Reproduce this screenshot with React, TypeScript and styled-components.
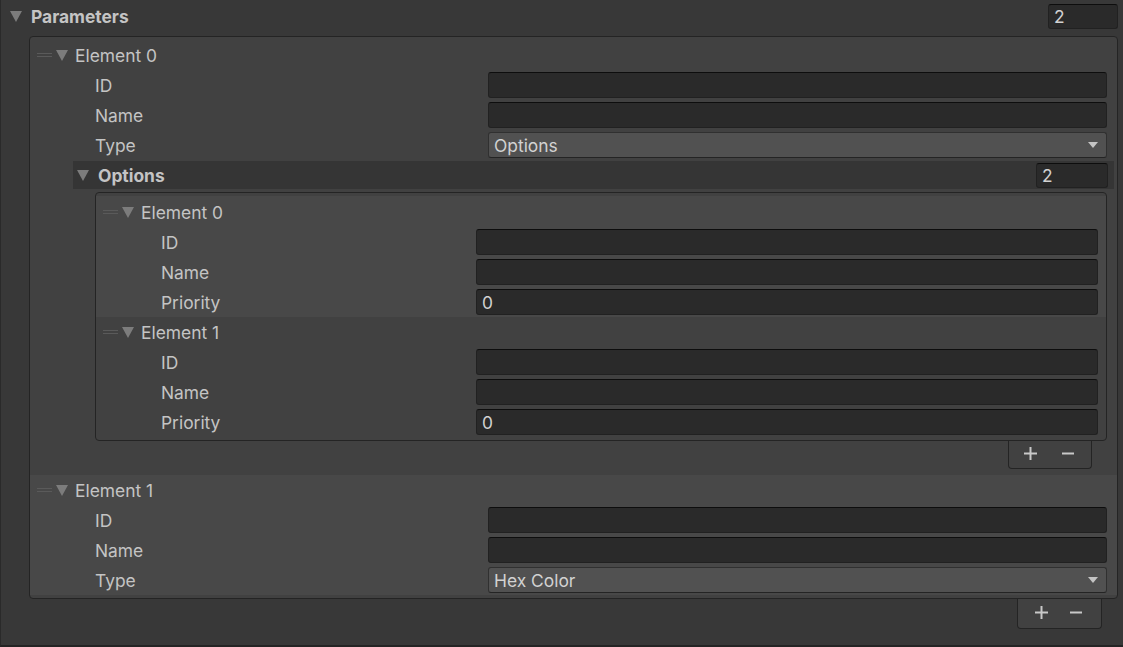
import React from "react";
import styled, { createGlobalStyle } from "styled-components";

const GlobalStyle = createGlobalStyle`
  html, body {
    margin: 0;
    padding: 0;
    background: #383838;
  }
  * {
    box-sizing: border-box;
  }
`;

const Inspector = styled.div`
  width: 1123px;
  height: 647px;
  background: #383838;
  border-left: 1px solid #2a2a2a;
  border-bottom: 2px solid #242424;
  font-family: Inter, "Noto Sans", sans-serif;
  font-size: 17.4px;
  color: #c4c4c4;
  overflow: hidden;
`;

const HeaderRow = styled.div`
  height: 36px;
  display: flex;
  align-items: center;
  padding: 0 5px 4px 9px;
`;

const Title = styled.span<{ $bold?: boolean }>`
  font-weight: ${(p) => (p.$bold ? 700 : 400)};
  flex: 1;
  white-space: nowrap;
`;

const Arrow = styled.span<{ $small?: boolean }>`
  display: inline-block;
  width: 0;
  height: 0;
  border-left: 6px solid transparent;
  border-right: 6px solid transparent;
  border-top: 11px solid #7c7c7c;
  margin-right: ${(p) => (p.$small ? 7 : 9)}px;
  flex-shrink: 0;
`;

const Handle = styled.span`
  width: 15px;
  height: 4px;
  border-top: 1px solid #5a5a5a;
  border-bottom: 1px solid #5a5a5a;
  margin: 0 4px 0 7px;
  flex-shrink: 0;
`;

const Field = styled.div<{ $width?: number }>`
  height: 26px;
  width: ${(p) => (p.$width ? `${p.$width}px` : "auto")};
  flex: ${(p) => (p.$width ? "none" : 1)};
  background: #2a2a2a;
  border: 1px solid #212121;
  border-top-color: #0d0d0d;
  border-radius: 3px;
  display: flex;
  align-items: center;
  padding-left: 5px;
  color: #d2d2d2;
`;

const Dropdown = styled.div`
  flex: 1;
  height: 26px;
  background: #515151;
  border: 1px solid #303030;
  border-bottom-color: #242424;
  border-radius: 3px;
  display: flex;
  align-items: center;
  padding: 0 8px 0 5px;
  color: #d2d2d2;
  justify-content: space-between;
`;

const DropArrow = styled.span`
  width: 0;
  height: 0;
  border-left: 5.5px solid transparent;
  border-right: 5.5px solid transparent;
  border-top: 6px solid #c4c4c4;
`;

const ListBox = styled.div<{ $ml: number; $mr: number; $pt: number; $pb: number }>`
  margin: 0 ${(p) => p.$mr}px 0 ${(p) => p.$ml}px;
  background: #414141;
  border: 1px solid #242424;
  border-radius: 4px;
  padding: ${(p) => p.$pt}px 0 ${(p) => p.$pb}px;
`;

const ElementBlock = styled.div<{ $active?: boolean; $pt?: number }>`
  background: ${(p) => (p.$active ? "#484848" : "transparent")};
  padding-top: ${(p) => p.$pt ?? 0}px;
`;

const Row = styled.div<{ $pr: number }>`
  height: 30px;
  display: flex;
  align-items: center;
  padding-right: ${(p) => p.$pr}px;
`;

const Label = styled.span<{ $width: number }>`
  width: ${(p) => p.$width}px;
  padding-left: 65px;
  flex-shrink: 0;
  white-space: nowrap;
`;

const SubHeader = styled.div`
  height: 28px;
  margin: 1px 3px 0 43px;
  background: #353535;
  display: flex;
  align-items: center;
  padding: 0 6px 0 4px;
`;

const FooterWrap = styled.div<{ $mr: number; $mb: number }>`
  display: flex;
  justify-content: flex-end;
  padding-right: ${(p) => p.$mr}px;
  margin-bottom: ${(p) => p.$mb}px;
`;

const Footer = styled.div<{ $width: number; $height: number; $pl: number; $pr: number }>`
  width: ${(p) => p.$width}px;
  height: ${(p) => p.$height}px;
  background: #414141;
  border: 1px solid #242424;
  border-top: none;
  border-radius: 0 0 4px 4px;
  display: flex;
  align-items: center;
  justify-content: space-between;
  padding: 0 ${(p) => p.$pr}px 2px ${(p) => p.$pl}px;
`;

const Plus = () => (
  <svg width="13" height="13" viewBox="0 0 13 13">
    <rect x="5.5" y="0" width="2" height="13" fill="#c8c8c8" />
    <rect x="0" y="5.5" width="13" height="2" fill="#c8c8c8" />
  </svg>
);

const Minus = () => (
  <svg width="12" height="13" viewBox="0 0 12 13">
    <rect x="0" y="5.5" width="12" height="2" fill="#c8c8c8" />
  </svg>
);

type FieldDef = { label: string; value?: string; dropdown?: boolean };

const ElementHeader: React.FC<{ name: string }> = ({ name }) => (
  <Row $pr={0}>
    <Handle />
    <Arrow $small />
    <Title>{name}</Title>
  </Row>
);

const FieldRow: React.FC<{ def: FieldDef; labelWidth: number; pr: number }> = ({
  def,
  labelWidth,
  pr,
}) => (
  <Row $pr={pr}>
    <Label $width={labelWidth}>{def.label}</Label>
    {def.dropdown ? (
      <Dropdown>
        {def.value}
        <DropArrow />
      </Dropdown>
    ) : (
      <Field>{def.value}</Field>
    )}
  </Row>
);

const optionFields: FieldDef[] = [
  { label: "ID" },
  { label: "Name" },
  { label: "Priority", value: "0" },
];

const App: React.FC = () => {
  return (
    <>
      <GlobalStyle />
      <Inspector>
        <HeaderRow>
          <Arrow />
          <Title $bold>Parameters</Title>
          <Field $width={70} style={{ height: 25 }}>2</Field>
        </HeaderRow>

        <ListBox $ml={28} $mr={5} $pt={3} $pb={3}>
          <ElementBlock>
            <ElementHeader name="Element 0" />
            <FieldRow def={{ label: "ID" }} labelWidth={458} pr={10} />
            <FieldRow def={{ label: "Name" }} labelWidth={458} pr={10} />
            <FieldRow
              def={{ label: "Type", value: "Options", dropdown: true }}
              labelWidth={458}
              pr={10}
            />
            <SubHeader>
              <Arrow />
              <Title $bold>Options</Title>
              <Field $width={72} style={{ height: 25 }}>2</Field>
            </SubHeader>

            <ListBox $ml={65} $mr={10} $pt={3} $pb={3} style={{ marginTop: 3 }}>
              {[0, 1].map((i) => (
                <ElementBlock key={i} $active={i === 0} $pt={i === 0 ? 1 : 0}>
                  <ElementHeader name={`Element ${i}`} />
                  {optionFields.map((f) => (
                    <FieldRow key={f.label} def={f} labelWidth={380} pr={8} />
                  ))}
                </ElementBlock>
              ))}
            </ListBox>
            <FooterWrap $mr={25} $mb={6}>
              <Footer $width={84} $height={28} $pl={15} $pr={17}>
                <Plus />
                <Minus />
              </Footer>
            </FooterWrap>
          </ElementBlock>

          <ElementBlock $active>
            <ElementHeader name="Element 1" />
            <FieldRow def={{ label: "ID" }} labelWidth={458} pr={10} />
            <FieldRow def={{ label: "Name" }} labelWidth={458} pr={10} />
            <FieldRow
              def={{ label: "Type", value: "Hex Color", dropdown: true }}
              labelWidth={458}
              pr={10}
            />
          </ElementBlock>
        </ListBox>
        <FooterWrap $mr={21} $mb={0}>
          <Footer $width={85} $height={30} $pl={17} $pr={19}>
            <Plus />
            <Minus />
          </Footer>
        </FooterWrap>
      </Inspector>
    </>
  );
};

export default App;
